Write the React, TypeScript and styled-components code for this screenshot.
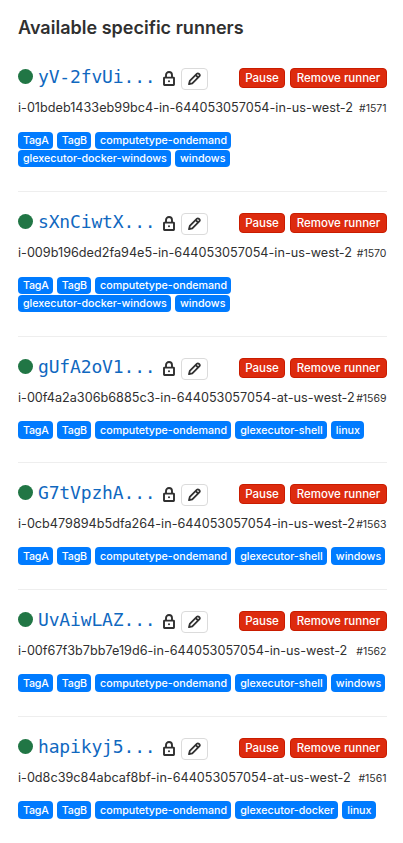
import React from 'react';
import styled, { createGlobalStyle } from 'styled-components';

const GlobalStyle = createGlobalStyle`
  * { box-sizing: border-box; }
  body {
    margin: 0;
    background: #fff;
    color: #303030;
    font-family: Inter, "Liberation Sans", sans-serif;
  }
`;

const Page = styled.main`
  padding: 17px 16px 0 18px;
`;

const Title = styled.h4`
  margin: 0;
  height: 30px;
  font-size: 18px;
  line-height: 21px;
  font-weight: 600;
  letter-spacing: 0.02px;
  white-space: nowrap;
`;

const List = styled.ul`
  list-style: none;
  margin: 0;
  padding: 0;
`;

const Item = styled.li<{ $height: number }>`
  height: ${(p) => p.$height}px;
  padding-top: 21px;
  display: flex;
  flex-direction: column;
  border-bottom: 1px solid #eee;
  &:last-child { border-bottom: 0; }
`;

const Header = styled.div`
  display: flex;
  align-items: flex-start;
  height: 31px;
`;

const Status = styled.span`
  width: 15px;
  height: 15px;
  margin-top: 1px;
  border-radius: 50%;
  background: #217645;
`;

const Name = styled.a`
  width: 119px;
  height: 20px;
  margin-left: 5px;
  color: #1068bf;
  font: 18px/18px "DejaVu Sans Mono", monospace;
  letter-spacing: -0.15px;
  white-space: nowrap;
  text-decoration: none;
`;

const LockIcon = styled.svg`
  width: 16px;
  height: 16px;
  margin: 3px 0 0 4px;
`;

const EditButton = styled.button`
  display: flex;
  align-items: center;
  justify-content: center;
  width: 27px;
  height: 22px;
  margin: 0 0 0 4px;
  padding: 0 2px 1px 0;
  border: 1px solid #dbdbdb;
  border-radius: 4px;
  background: #fff;
  color: #303030;
  svg { width: 16px; height: 16px; }
`;

const Actions = styled.div`
  display: flex;
  gap: 5px;
  margin-left: auto;
`;

const DangerButton = styled.button<{ $width: number }>`
  width: ${(p) => p.$width}px;
  height: 20px;
  padding: 0;
  border: 1px solid #c91c00;
  border-radius: 4px;
  background: #dd2b0e;
  color: #fff;
  font: 500 11.5px/18px Inter, sans-serif;
  white-space: nowrap;
`;

const Details = styled.div`
  display: flex;
  align-items: baseline;
  justify-content: space-between;
  height: 32px;
  line-height: 18px;
  white-space: nowrap;
`;

const Description = styled.span`
  font-size: 12.66px;
`;

const RunnerId = styled.small`
  font-size: 10.5px;
  margin-right: 0.5px;
`;

const Tags = styled.div<{ $wrapped: boolean }>`
  display: flex;
  flex-wrap: wrap;
  gap: 1px 4px;
  padding-top: ${(p) => (p.$wrapped ? 1 : 0)}px;
`;

const Tag = styled.span<{ $compact: boolean; $tight: boolean }>`
  height: ${(p) => (p.$compact ? 17 : 18)}px;
  padding: 0 4.2px 0 5px;
  border-radius: 4px;
  background: #007bff;
  color: #fff;
  font-size: 10.68px;
  font-weight: 500;
  letter-spacing: ${(p) => (p.$tight ? '-0.2px' : '0')};
  line-height: ${(p) => (p.$compact ? 18 : 19)}px;
  white-space: nowrap;
`;

const BASE = ['TagA', 'TagB', 'computetype-ondemand'];

const runners = [
  { name: 'yV-2fvUi', desc: 'i-01bdeb1433eb99bc4-in-644053057054-in-us-west-2', id: 1571, tags: ['glexecutor-docker-windows', 'windows'], height: 145 },
  { name: 'sXnCiwtX', desc: 'i-009b196ded2fa94e5-in-644053057054-in-us-west-2', id: 1570, tags: ['glexecutor-docker-windows', 'windows'], height: 145 },
  { name: 'gUfA2oV1', desc: 'i-00f4a2a306b6885c3-in-644053057054-at-us-west-2', id: 1569, tags: ['glexecutor-shell', 'linux'], height: 126 },
  { name: 'G7tVpzhA', desc: 'i-0cb479894b5dfa264-in-644053057054-in-us-west-2', id: 1563, tags: ['glexecutor-shell', 'windows'], height: 127 },
  { name: 'UvAiwLAZ', desc: 'i-00f67f3b7bb7e19d6-in-644053057054-in-us-west-2', id: 1562, tags: ['glexecutor-shell', 'windows'], height: 127 },
  { name: 'hapikyj5', desc: 'i-0d8c39c84abcaf8bf-in-644053057054-at-us-west-2', id: 1561, tags: ['glexecutor-docker', 'linux'], height: 126 },
];

const Lock = () => (
  <LockIcon viewBox="0 0 16 16" fill="none" stroke="#303030" aria-label="Locked">
    <path d="M5 6.5V4a3 3 0 0 1 6 0v2.5" strokeWidth="1.9" />
    <rect x="3" y="6.6" width="10" height="7.4" rx="0.4" strokeWidth="1.9" />
    <circle cx="8" cy="10.3" r="1" fill="#303030" stroke="none" />
  </LockIcon>
);

const Pencil = () => (
  <svg viewBox="0 0 16 16" fill="none" stroke="currentColor" strokeWidth="1.8" strokeLinejoin="round" aria-hidden="true">
    <path d="M3 13.2l.8-3.3 7.2-7.2a1.2 1.2 0 0 1 1.7 0l.8.8a1.2 1.2 0 0 1 0 1.7L6.3 12.4z" />
    <path d="M9.8 4.2l2.3 2.3" />
  </svg>
);

export default function App() {
  return (
    <Page>
      <GlobalStyle />
      <Title>Available specific runners</Title>
      <List>
        {runners.map((r) => {
          const wrapped = r.height === 145;
          return (
            <Item key={r.id} $height={r.height}>
              <Header>
                <Status />
                <Name href="#">{r.name}...</Name>
                <Lock />
                <EditButton aria-label="Edit"><Pencil /></EditButton>
                <Actions>
                  <DangerButton $width={46}>Pause</DangerButton>
                  <DangerButton $width={97}>Remove runner</DangerButton>
                </Actions>
              </Header>
              <Details>
                <Description>{r.desc}</Description>
                <RunnerId>#{r.id}</RunnerId>
              </Details>
              <Tags $wrapped={wrapped}>
                {[...BASE, ...r.tags].map((t) => (
                  <Tag key={t} $compact={wrapped} $tight={t.length === 4}>{t}</Tag>
                ))}
              </Tags>
            </Item>
          );
        })}
      </List>
    </Page>
  );
}
